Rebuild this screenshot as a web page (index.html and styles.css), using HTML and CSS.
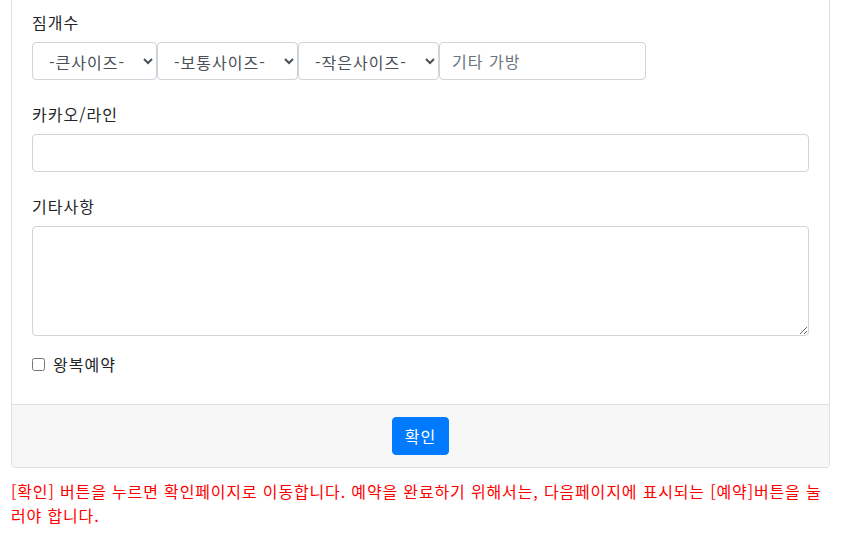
FILE: index.html
```html
<!DOCTYPE html>
<html lang="ko">
<head>
<meta charset="utf-8">
<link rel="stylesheet" href="styles.css">
</head>
<body>
<div class="page">
  <form class="card">
    <div class="card-body">
      <div class="group group-wide">
        <label class="label">짐개수</label>
        <div class="row">
          <select class="control sel sel-l"><option>-큰사이즈-</option></select>
          <select class="control sel sel-m"><option>-보통사이즈-</option></select>
          <select class="control sel sel-m"><option>-작은사이즈-</option></select>
          <input class="control etc" type="text" placeholder="기타 가방">
        </div>
      </div>
      <div class="group group-wide">
        <label class="label">카카오/라인</label>
        <input class="control full" type="text">
      </div>
      <div class="group">
        <label class="label">기타사항</label>
        <textarea class="control full area"></textarea>
      </div>
      <div class="check">
        <input type="checkbox" class="box" id="rt">
        <label for="rt" class="check-label">왕복예약</label>
      </div>
    </div>
    <div class="card-footer">
      <button type="button" class="btn">확인</button>
    </div>
  </form>
  <p class="notice">[확인] 버튼을 누르면 확인페이지로 이동합니다. 예약을 완료하기 위해서는, 다음페이지에 표시되는 [예약]버튼을 눌러야 합니다.</p>
</div>
</body>
</html>
```
FILE: styles.css
```css
* { box-sizing: border-box; }
html, body { margin: 0; padding: 0; background: #fff; }
body {
  font-family: "Noto Sans CJK KR", "Noto Sans", sans-serif;
  font-size: 16px;
  line-height: 24px;
  letter-spacing: 1px;
  color: #212529;
}
.page {
  padding: 0 20px 0 11px;
}
.card {
  display: block;
  width: 819px;
  margin-top: -11px;
  border: 1px solid #dfdfdf;
  border-radius: 4px;
  background: #fff;
}
.card-body {
  padding: 20px 20px 28px 20px;
}
.group { margin-bottom: 16px; }
.group-wide { margin-bottom: 22px; }
.label {
  display: block;
  margin-bottom: 8px;
  line-height: 24px;
}
.row { display: flex; }
.control {
  font-family: inherit;
  font-size: 16px;
  letter-spacing: inherit;
  color: #495057;
  background: #fff;
  border: 1px solid #ced4da;
  border-radius: 4px;
  height: 38px;
  padding: 6px 12px;
  line-height: 24px;
  margin: 0;
}
.sel { padding: 6px 4px 6px 12px; }
.sel-l { width: 125px; }
.sel-m { width: 141px; }
.etc { width: 207px; }
.etc::placeholder { color: #6c757d; }
.full { display: block; width: 100%; }
.area { height: 110px; resize: vertical; }
.check {
  display: flex;
  align-items: center;
  height: 24px;
}
.box {
  width: 13px;
  height: 13px;
  margin: 0 8px 0 0;
}
.check-label { line-height: 24px; }
.card-footer {
  background: #f7f7f7;
  border-top: 1px solid #dfdfdf;
  padding: 12px 20px;
  display: flex;
  justify-content: center;
  border-radius: 0 0 3px 3px;
}
.btn {
  font-family: inherit;
  font-size: 16px;
  letter-spacing: inherit;
  line-height: 24px;
  color: #fff;
  background: #007bff;
  border: 1px solid #007bff;
  border-radius: 4px;
  padding: 6px 12px;
  height: 38px;
}
.notice {
  width: 819px;
  margin: 11px 0 0 0;
  color: #ff0000;
  line-height: 24px;
  letter-spacing: 0.85px;
}
```
